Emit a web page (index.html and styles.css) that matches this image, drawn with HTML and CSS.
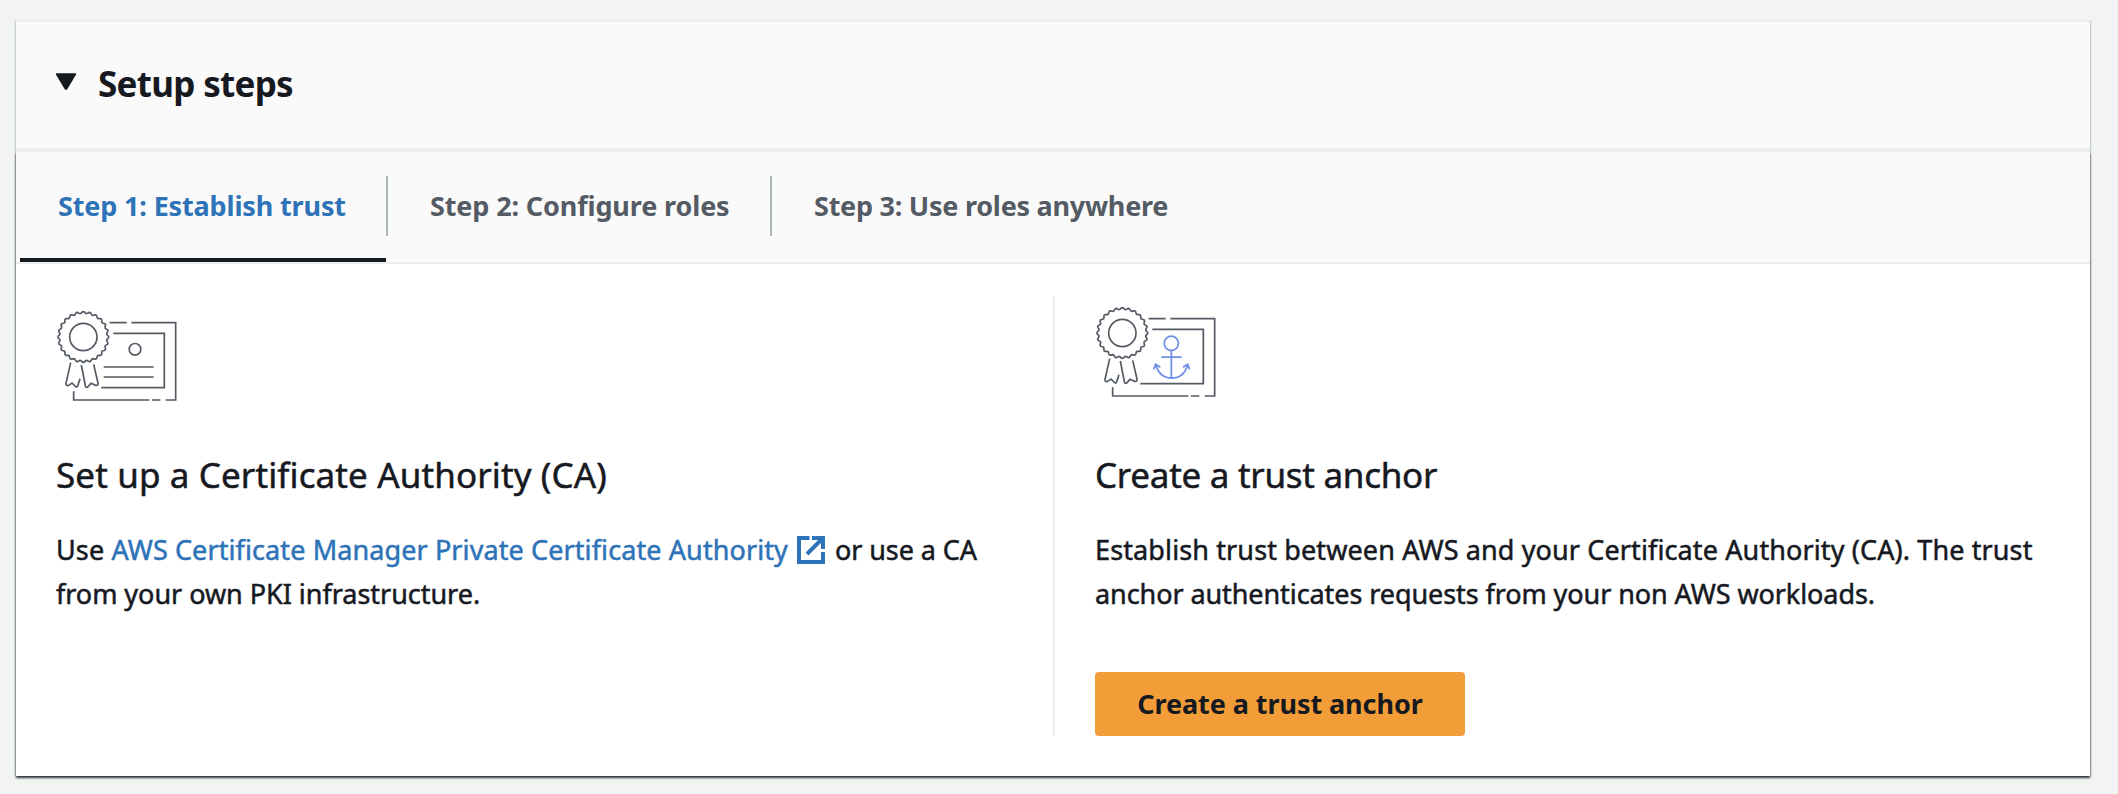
FILE: index.html
```
<!DOCTYPE html>
<html lang="en">
<head>
<meta charset="utf-8">
<title>Setup steps</title>
<link rel="stylesheet" href="styles.css">
</head>
<body>
<svg class="defs" aria-hidden="true">
  <symbol id="certificate" viewBox="45 45 366 276">
    <path class="seal" d=""/>
    <circle cx="127" cy="126" r="41"/>
    <path d="M89 203L75 265Q74 274 83 271L93 264L104 275Q108 278 110 273L117 251"/>
    <path d="M121 210L133 272Q135 279 140 276L150 265L164 271Q173 272 171 264L158 208"/>
    <path d="M206 83H257M271 83H404V315H374M358 315H333M325 315H98V289"/>
    <path d="M217 115H370V278H181"/>
  </symbol>
</svg>
<main class="panel">
  <header class="panel-header">
    <svg class="caret" viewBox="0 0 20 16"><path d="M1.2 1H18.800L10.500 15H9.500Z"/></svg>
    <h2>Setup steps</h2>
  </header>
  <section class="panel-body">
    <nav class="tabs">
      <a class="tab active"><span>Step 1: Establish trust</span></a>
      <a class="tab"><span class="second">Step 2: Configure roles</span></a>
      <a class="tab"><span>Step 3: Use roles anywhere</span></a>
    </nav>
    <div class="columns">
      <article class="column">
        <div class="art">
          <svg class="icon" viewBox="45 45 366 276">
            <use href="#certificate" x="45" y="45" width="366" height="276"/>
            <circle cx="282" cy="163" r="17.5"/>
            <path d="M188 216H338M188 246H338"/>
          </svg>
        </div>
        <h3 class="ca">Set up a Certificate Authority (CA)</h3>
        <p>Use <a class="link">AWS Certificate Manager Private Certificate Authority<svg class="external" viewBox="0 0 28 28"><path d="M12.5 2H2V26H26V16"/><path d="M15 2H26V13M25 3L10 18"/></svg></a><span class="snug">or use a CA</span><br><span class="tight">from your own PKI infrastructure.</span></p>
      </article>
      <article class="column">
        <div class="art raised">
          <svg class="icon" viewBox="45 45 366 276">
            <use href="#certificate" x="45" y="45" width="366" height="276"/>
            <g class="anchor">
              <circle cx="274" cy="157" r="21.5"/>
              <path d="M274 179V261M244 198.500H305M227 221Q239 261 275 261Q312 261 323 221M221 235L227 220L241 229M309 229L323 220L329 235"/>
            </g>
          </svg>
        </div>
        <h3 class="trust">Create a trust anchor</h3>
        <p>Establish trust between AWS and your Certificate Authority (CA). The trust<br><span class="snug">anchor authenticates requests from your non AWS workloads.</span></p>
        <button class="primary">Create a trust anchor</button>
      </article>
    </div>
  </section>
</main>
<script src="seal.js"></script>
</body>
</html>
```
FILE: styles.css
```
* { box-sizing: border-box; }
body {
  margin: 0;
  height: 794px;
  padding: 20px 28px 18px 16px;
  background: #f2f3f3;
  color: #16191f;
  font: 27px/44px "Noto Sans", "Open Sans", sans-serif;
  overflow: hidden;
}
.defs { position: absolute; width: 0; height: 0; }
.panel { display: flex; flex-direction: column; height: 756px; }
.panel-header {
  position: relative;
  z-index: 1;
  display: flex;
  height: 132px;
  padding: 40px 39px 0;
  gap: 21px;
  background: #fafafa;
  border-top: 2px solid #eaeded;
  border-bottom: 4px solid #eaeded;
  box-shadow: 0 0 2px #00283c90;
  clip-path: inset(0 -4px 0 -4px);
}
.caret { width: 22px; height: 17px; margin-top: 11px; fill: #16191f; stroke: #16191f; stroke-width: 1.6; stroke-linejoin: round; }
h2, h3, p { margin: 0; }
h2 { font-size: 35px; font-weight: 700; letter-spacing: -.7px; }
.panel-body {
  position: relative;
  height: 624px;
  background: #fff;
  box-shadow: 0 2px 2px #30393f, 0 0 2px #4a555f;
}
.tabs {
  display: flex;
  height: 112px;
  padding-left: 4px;
  background: #fafafa;
  border-bottom: 2px solid #eaeded;
}
.tab {
  display: flex;
  height: 110px;
  color: #545b64;
  font-weight: 700;
  letter-spacing: -.25px;
  white-space: nowrap;
}
.tab span {
  width: 384px;
  height: 60px;
  margin-top: 24px;
  padding: 8px 0 0 42px;
  border-right: 2px solid #aab7b8;
}
.tab.active { color: #2e73b8; background: linear-gradient(#16191f, #16191f) 0 100% / 366px 4px no-repeat; }
.tab.active span { width: 368px; padding-left: 38px; letter-spacing: -.15px; }
.tab:last-child span { border: 0; }
.tab .second { letter-spacing: -.13px; }
.columns { display: grid; grid-template-columns: 1039px 1035px; padding-top: 32px; }
.column { height: 440px; padding-left: 40px; white-space: nowrap; -webkit-text-stroke: .5px currentColor; }
.column + .column { border-left: 2px solid #eaeded; margin-left: -2px; }
.art { height: 157px; padding-top: 14px; }
.art.raised { padding-top: 10px; }
.icon { display: block; width: 122px; height: 92px; fill: none; stroke: #545b64; stroke-width: 5.1; }
.icon .anchor { stroke: #6f8fe8; stroke-width: 5.3; }
h3 { font-size: 35px; font-weight: 400; letter-spacing: .12px; }
h3.trust { letter-spacing: -.28px; }
p { margin-top: 31px; letter-spacing: .12px; }
.tight { letter-spacing: -.03px; }
.snug { letter-spacing: -.08px; }
.link { color: #2e73b8; letter-spacing: .1px; }
.external { width: 28px; height: 28px; margin: 0 10px 0 9px; vertical-align: -4px; fill: none; stroke: #2e73b8; stroke-width: 4; }
.primary {
  display: block;
  width: 370px;
  height: 64px;
  margin-top: 56px;
  padding: 0;
  border: 0;
  border-radius: 4px;
  background: #f29d38;
  color: #16191f;
  font: 700 27px/44px "Noto Sans", "Open Sans", sans-serif;
  letter-spacing: -.07px;
  -webkit-text-stroke: 0;
}
```
FILE: seal.js
```
// Scalloped edge of the seal: 24 waves around its centre.
const points = [];
for (let i = 0; i < 240; i++) {
  const a = i * Math.PI / 120;
  const r = 73.5 + 2.8 * Math.cos(24 * a);
  points.push((127 + r * Math.cos(a)).toFixed(2) + " " + (126 + r * Math.sin(a)).toFixed(2));
}
document.querySelector(".seal").setAttribute("d", "M" + points.join("L") + "Z");
```
